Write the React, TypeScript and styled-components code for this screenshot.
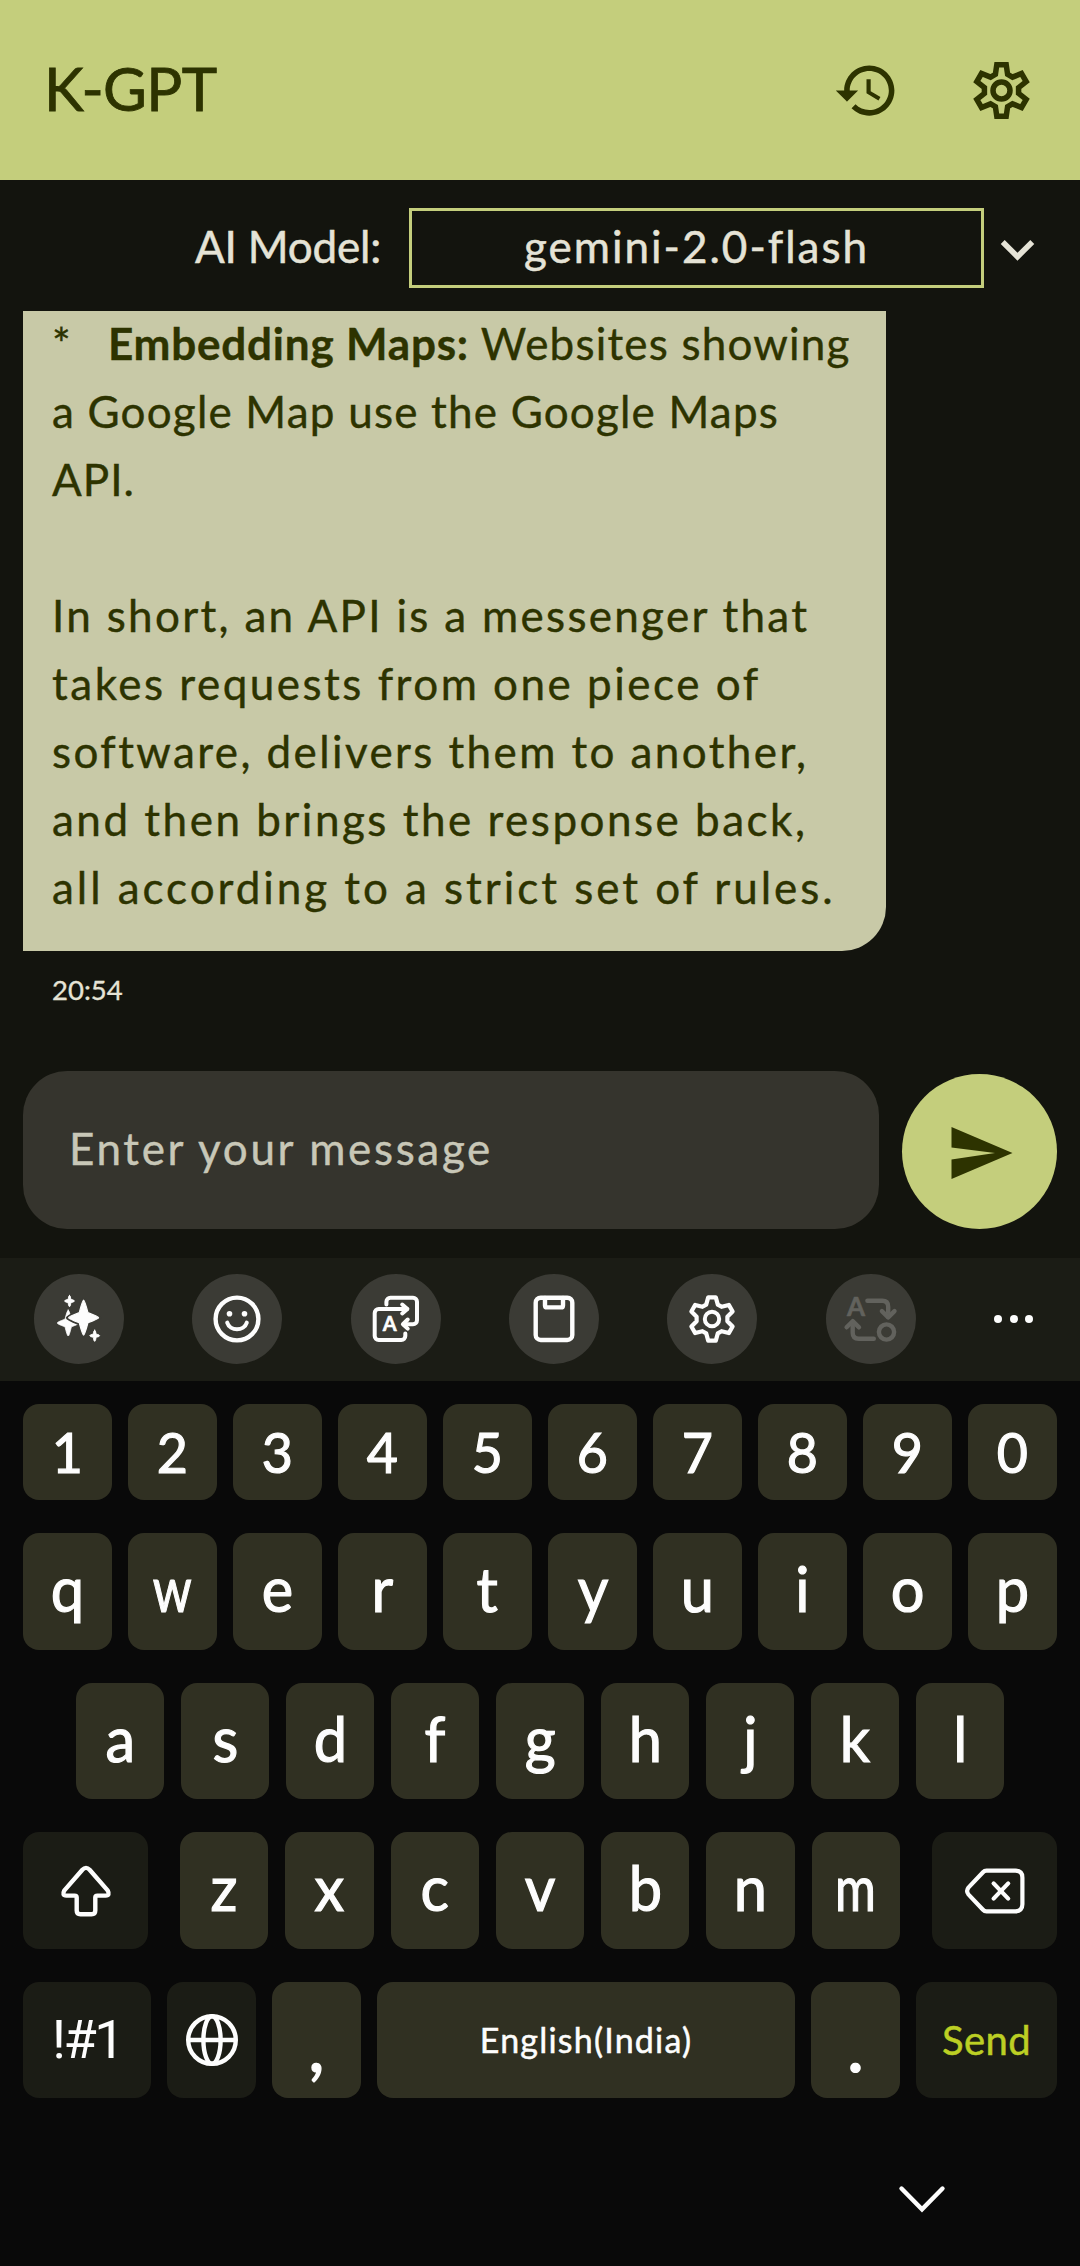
import React from "react";
import styled, { createGlobalStyle } from "styled-components";

const c = {
  lime: "#c4ce7c",
  olive: "#2d3300",
  surface: "#13140e",
  text: "#e5e3d6",
  bubble: "#c8c9a7",
  field: "#35342d",
  hint: "#c8c7b7",
  bar: "#1b1c15",
  chip: "#3b3b35",
  board: "#090909",
  key: "#303022",
  white: "#fdfdfd",
  send: "#bccf24",
  muted: "#62625d",
};

const Global = createGlobalStyle`
  * { box-sizing: border-box; }
  body { margin: 0; background: ${c.board}; }
`;

const Screen = styled.div`
  width: 1080px;
  height: 2266px;
  display: flex;
  flex-direction: column;
  background: ${c.surface};
  font-family: Lato, "Open Sans", sans-serif;
  overflow: hidden;
`;

const Header = styled.header`
  height: 180px;
  flex: none;
  display: flex;
  align-items: center;
  padding: 0 45px 0 44px;
  background: ${c.lime};
  color: ${c.olive};
`;

const Title = styled.h1`
  margin: 0;
  flex: 1;
  font-size: 60px;
  font-weight: 400;
  line-height: 180px;
  letter-spacing: -0.6px;
  -webkit-text-stroke: 0.8px currentColor;
  padding-bottom: 5px;
`;

const HeaderActions = styled.div`
  display: flex;
  align-items: center;
  gap: 68px;
`;

const Svg = styled.svg`
  display: block;
  flex: none;
  overflow: visible;
`;

const ModelRow = styled.div`
  height: 131px;
  flex: none;
  display: flex;
  align-items: flex-start;
  justify-content: flex-end;
  padding: 28px 29px 0 0;
  color: ${c.text};
`;

const ModelLabel = styled.div`
  width: 214px;
  font-size: 44px;
  line-height: 76px;
  letter-spacing: -0.2px;
  white-space: nowrap;
  -webkit-text-stroke: 0.5px currentColor;
`;

const ModelSelect = styled.div`
  width: 575px;
  height: 80px;
  border: 3px solid ${c.lime};
  font-size: 44px;
  line-height: 70px;
  letter-spacing: 2px;
  text-align: center;
  -webkit-text-stroke: 0.5px currentColor;
`;

const ChevronSlot = styled.div`
  width: 67px;
  padding-top: 8px;
`;

const Chat = styled.main`
  height: 747px;
  flex: none;
  padding-left: 23px;
`;

const Bubble = styled.div`
  width: 863px;
  height: 640px;
  overflow: hidden;
  padding: 0 29px;
  background: ${c.bubble};
  border-bottom-right-radius: 44px;
  color: ${c.olive};
`;

const Line = styled.div<{ $ls?: number; $ws?: number; $first?: boolean }>`
  height: 68px;
  margin-top: ${(p) => (p.$first ? -2 : 0)}px;
  font-size: 44px;
  line-height: 68px;
  white-space: pre;
  letter-spacing: ${(p) => p.$ls ?? 0}px;
  word-spacing: ${(p) => p.$ws ?? 0}px;
  -webkit-text-stroke: 0.4px currentColor;
`;

const Bullet = styled.span`
  display: inline-block;
  width: 56px;
`;

const Strong = styled.b<{ $ls: number }>`
  font-weight: 700;
  letter-spacing: ${(p) => p.$ls}px;
`;

const Time = styled.div`
  padding: 22px 0 0 29px;
  font-size: 27.5px;
  line-height: 34px;
  color: ${c.text};
  -webkit-text-stroke: 0.3px currentColor;
`;

const Composer = styled.div`
  height: 200px;
  flex: none;
  display: flex;
  align-items: flex-start;
  gap: 23px;
  padding: 13px 23px 0;
`;

const Field = styled.div`
  flex: 1;
  height: 158px;
  border-radius: 44px;
  background: ${c.field};
  color: ${c.hint};
  padding-left: 46px;
  font-size: 44px;
  line-height: 155px;
  letter-spacing: 2.65px;
  -webkit-text-stroke: 0.4px currentColor;
`;

const SendButton = styled.div`
  width: 155px;
  height: 155px;
  margin-top: 3px;
  border-radius: 50%;
  background: ${c.lime};
  display: flex;
  align-items: center;
  justify-content: center;
`;

const Toolbar = styled.div`
  height: 123px;
  flex: none;
  display: flex;
  align-items: center;
  justify-content: space-between;
  padding: 0 36px 1px 34px;
  background: ${c.bar};
`;

const Chip = styled.div<{ $muted?: boolean }>`
  width: 90px;
  height: 90px;
  border-radius: 50%;
  background: ${c.chip};
  color: ${(p) => (p.$muted ? c.muted : c.white)};
  display: flex;
  align-items: center;
  justify-content: center;
`;

const MoreButton = styled.div`
  width: 60px;
  display: flex;
  justify-content: center;
  gap: 7.5px;
`;

const Dot = styled.i`
  width: 8px;
  height: 8px;
  border-radius: 50%;
  background: ${c.white};
`;

const Keyboard = styled.div`
  flex: 1;
  display: flex;
  flex-direction: column;
  gap: 33px;
  padding: 23px 23px 0;
  background: ${c.board};
`;

const Row = styled.div<{ $h: number; $inset?: number; $gap?: number }>`
  height: ${(p) => p.$h}px;
  flex: none;
  display: flex;
  gap: ${(p) => p.$gap ?? 16}px;
  padding: 0 ${(p) => p.$inset ?? 0}px;
`;

const Key = styled.div<{
  $w?: number;
  $dark?: boolean;
  $size?: number;
  $lift?: number;
  $drop?: number;
  $ls?: number;
  $accent?: boolean;
}>`
  ${(p) => (p.$w ? `flex: 0 0 ${p.$w}px;` : "flex: 1 1 0;")}
  display: flex;
  align-items: center;
  justify-content: center;
  border-radius: 16px;
  background: ${(p) => (p.$dark ? c.bar : c.key)};
  color: ${(p) => (p.$accent ? c.send : c.white)};
  font-size: ${(p) => p.$size ?? 62}px;
  line-height: 1.2;
  letter-spacing: ${(p) => p.$ls ?? 0}px;
  padding-bottom: ${(p) => p.$lift ?? 0}px;
  padding-top: ${(p) => p.$drop ?? 0}px;
  -webkit-text-stroke: ${(p) => ((p.$size ?? 62) > 50 ? 1.2 : 0.5)}px currentColor;
`;

const SymbolKey = styled(Key)`
  font-family: Roboto, sans-serif;
  -webkit-text-stroke: 0;
`;

const Glyph = styled.span<{ $narrow?: boolean }>`
  display: inline-block;
  transform: scaleX(${(p) => (p.$narrow ? 0.8 : 0.96)});
`;

const Letters = styled.div`
  flex: 1;
  display: flex;
  gap: 17px;
`;

const NavBar = styled.div`
  height: 168px;
  margin-top: -33px;
  display: flex;
  justify-content: flex-end;
  align-items: center;
  padding: 34px 105px 0 0;
  color: ${c.white};
`;

type IconProps = { size?: number; sw?: number; children: React.ReactNode };

const Icon = ({ size = 60, sw = 4.4, children }: IconProps) => (
  <Svg
    width={size}
    height={size}
    viewBox={`${-size / 2} ${-size / 2} ${size} ${size}`}
    fill="none"
    stroke="currentColor"
    strokeWidth={sw}
    strokeLinecap="round"
    strokeLinejoin="round"
  >
    {children}
  </Svg>
);

// Six-toothed gear outline: tooth tip and tooth base given as half-width and radius.
const gear = (tipW: number, tipR: number, baseW: number, baseR: number) => {
  const pts: string[] = [];
  for (let i = 0; i < 6; i++) {
    const a = (i * Math.PI) / 3;
    [
      [-baseW, -baseR],
      [-tipW, -tipR],
      [tipW, -tipR],
      [baseW, -baseR],
    ].forEach(([x, y]) => {
      pts.push(
        `${(x * Math.cos(a) - y * Math.sin(a)).toFixed(2)},${(x * Math.sin(a) + y * Math.cos(a)).toFixed(2)}`
      );
    });
  }
  return pts.join(" ");
};

// Four-pointed star with softly rounded tips.
const star = (x: number, y: number, rx: number, ry: number) => {
  const k = 0.29;
  return `M${x} ${y - ry}Q${x + 1} ${y - ry} ${x + rx * k} ${y - ry * k}Q${x + rx} ${y - 1} ${x + rx} ${y}Q${x + rx} ${y + 1} ${x + rx * k} ${y + ry * k}Q${x + 1} ${y + ry} ${x} ${y + ry}Q${x - 1} ${y + ry} ${x - rx * k} ${y + ry * k}Q${x - rx} ${y + 1} ${x - rx} ${y}Q${x - rx} ${y - 1} ${x - rx * k} ${y - ry * k}Q${x - 1} ${y - ry} ${x} ${y - ry}Z`;
};

const HistoryIcon = () => (
  <Svg width="67" height="67" viewBox="0 0 24 24" fill={c.olive}>
    <path d="M13 3c-4.97 0-9 4.03-9 9H1l3.89 3.89.07.14L9 12H6c0-3.87 3.13-7 7-7s7 3.13 7 7-3.13 7-7 7c-1.93 0-3.68-.79-4.94-2.06l-1.42 1.42C8.27 19.99 10.51 21 13 21c4.97 0 9-4.03 9-9s-4.03-9-9-9zm-1 5v5l4.28 2.54.72-1.21-3.5-2.08V8H12z" />
  </Svg>
);

const HeaderGear = () => (
  <Icon size={67} sw={5.5}>
    <polygon points={gear(4.7, 25.8, 6.1, 16.2)} strokeLinejoin="miter" />
    <circle r="8.5" />
  </Icon>
);

const Sparkles = () => (
  <Icon sw={0}>
    <path d={star(-10.8, 4, 11, 13)} fill="currentColor" stroke="currentColor" strokeWidth="0.8" />
    <path d={star(4.6, -1.3, 15.6, 18)} fill="currentColor" stroke={c.chip} strokeWidth="4.4" />
    <path d={star(4.6, -1.3, 15, 17.5)} fill="currentColor" stroke="currentColor" strokeWidth="1.2" />
    <path d={star(-9.5, -18, 5, 5.7)} fill="currentColor" stroke="currentColor" strokeWidth="0.8" />
    <path d={star(15.7, 16.7, 5, 5.7)} fill="currentColor" stroke="currentColor" strokeWidth="0.8" />
  </Icon>
);

const Smile = () => (
  <Icon>
    <circle r="21.4" />
    <circle cx="-7.5" cy="-5.3" r="2.8" fill="currentColor" stroke="none" />
    <circle cx="7.5" cy="-5.3" r="2.8" fill="currentColor" stroke="none" />
    <path d="M-9.8 3.6C-7 12.6 7 12.6 9.8 3.6" strokeWidth="4" />
  </Icon>
);

const IconLetter = styled.text`
  font-family: Lato, sans-serif;
  font-weight: 700;
  fill: currentColor;
  stroke: currentColor;
  stroke-width: 0.6px;
  text-anchor: middle;
`;

const Translate = () => (
  <Icon sw={4}>
    <path d="M11-10H-17.3a4 4 0 0 0-4 4V17a4 4 0 0 0 4 4H5.3a4 4 0 0 0 4-4V14.6" />
    <path d="M6.2-14.5L11.4-10L6.2-5.5" />
    <path d="M-9.6-14.6V-17.3a4 4 0 0 1 4-4H17a4 4 0 0 1 4 4V1.3a4 4 0 0 1-4 4H7.6" />
    <path d="M11.7.5L6.9 5.2L11.7 9.6" />
    <IconLetter x="-6.4" y="12.4" fontSize="20">A</IconLetter>
  </Icon>
);

const Clipboard = () => (
  <Icon>
    <rect x="-18.3" y="-21.3" width="36.6" height="42.3" rx="5" />
    <path d="M-9-21V-13.6q0 2 2 2H7q2 0 2-2V-21" />
  </Icon>
);

const KeyboardGear = () => (
  <Icon sw={4}>
    <polygon points={gear(3.8, 21.6, 5.8, 14.4)} strokeWidth="4.2" />
    <circle r="7.2" />
  </Icon>
);

const Swap = () => (
  <Icon>
    <IconLetter x="-15" y="-3" fontSize="26">A</IconLetter>
    <path d="M-3.6-18.3H11.2q6 0 6 6V-2" />
    <path d="M10.9-7.9L17.2-1.6L23.5-7.9" />
    <path d="M-18.3 3V13.7q0 6 6 6H2.8" />
    <path d="M-24.4 8.3L-18.3 2.2L-12 8.3" />
    <circle cx="15.5" cy="13" r="7.6" />
  </Icon>
);

const Shift = () => (
  <Icon sw={4.4}>
    <path d="M-3.6-21.2Q0-25 3.6-21.2L21.6-.6Q24.4 4.6 19.6 4.6H11.4Q9.3 4.6 9.3 6.6V19.5Q9.3 23.2 5.6 23.2H-5.6Q-9.3 23.2-9.3 19.5V6.6Q-9.3 4.6-11.4 4.6H-19.6Q-24.4 4.6-21.6-.6Z" />
  </Icon>
);

const Backspace = () => (
  <Icon size={64} sw={4.2}>
    <path d="M-8.5-20.3H20.4q7 0 7 7V13.3q0 7-7 7H-8.5Q-10.6 20.3-12 18.8L-26.4 3.6Q-29.4 0-26.4-3.6L-12-18.8Q-10.6-20.3-8.5-20.3Z" />
    <path d="M-1.4-7.6L13.2 7.6M13.2-7.6L-1.4 7.6" />
  </Icon>
);

const Globe = () => (
  <Icon>
    <circle r="23.8" />
    <ellipse rx="8.6" ry="23.8" />
    <path d="M-23 0H23" />
  </Icon>
);

const ChevronDown = () => (
  <Svg width="67" height="67" viewBox="0 0 24 24" fill={c.text}>
    <path d="M16.59 8.59 12 13.17 7.41 8.59 6 10l6 6 6-6z" />
  </Svg>
);

const letterKeys = (s: string) =>
  s.split("").map((k) => (
    <Key key={k} $lift={6}>
      <Glyph $narrow={k === "m" || k === "w"}>{k}</Glyph>
    </Key>
  ));

export default function App() {
  return (
    <Screen>
      <Global />
      <Header>
        <Title>K-GPT</Title>
        <HeaderActions>
          <HistoryIcon />
          <HeaderGear />
        </HeaderActions>
      </Header>

      <ModelRow>
        <ModelLabel>AI Model:</ModelLabel>
        <ModelSelect>gemini-2.0-flash</ModelSelect>
        <ChevronSlot>
          <ChevronDown />
        </ChevronSlot>
      </ModelRow>

      <Chat>
        <Bubble>
          <Line $first $ls={1.2}>
            <Bullet>*</Bullet>
            <Strong $ls={0.8}>Embedding Maps:</Strong> Websites showing
          </Line>
          <Line $ls={1.2}>a Google Map use the Google Maps</Line>
          <Line $ls={1}>API.</Line>
          <Line />
          <Line $ls={2.3}>In short, an API is a messenger that</Line>
          <Line $ls={2.5}>takes requests from one piece of</Line>
          <Line $ls={2.4}>software, delivers them to another,</Line>
          <Line $ls={2.5}>and then brings the response back,</Line>
          <Line $ls={2.95}>all according to a strict set of rules.</Line>
        </Bubble>
        <Time>20:54</Time>
      </Chat>

      <Composer>
        <Field>Enter your message</Field>
        <SendButton>
          <Svg width="64" height="60" viewBox="0 0 64 60" fill={c.olive}>
            <path d="M3.5 5L64.5 31L3.5 57V37.5L47 31L3.5 25.5Z" />
          </Svg>
        </SendButton>
      </Composer>

      <Toolbar>
        <Chip><Sparkles /></Chip>
        <Chip><Smile /></Chip>
        <Chip><Translate /></Chip>
        <Chip><Clipboard /></Chip>
        <Chip><KeyboardGear /></Chip>
        <Chip $muted><Swap /></Chip>
        <MoreButton>
          <Dot />
          <Dot />
          <Dot />
        </MoreButton>
      </Toolbar>

      <Keyboard>
        <Row $h={96}>
          {"1234567890".split("").map((k) => (
            <Key key={k} $size={56}>
              <Glyph>{k}</Glyph>
            </Key>
          ))}
        </Row>
        <Row $h={117}>{letterKeys("qwertyuiop")}</Row>
        <Row $h={116} $inset={53} $gap={17}>{letterKeys("asdfghjkl")}</Row>
        <Row $h={117} $gap={32}>
          <Key $w={125} $dark><Shift /></Key>
          <Letters>{letterKeys("zxcvbnm")}</Letters>
          <Key $w={125} $dark><Backspace /></Key>
        </Row>
        <Row $h={116}>
          <SymbolKey $w={128} $dark $size={54} $ls={-2.5}>!#1</SymbolKey>
          <Key $w={89} $dark><Globe /></Key>
          <Key $w={89} $drop={8} $size={74}>,</Key>
          <Key $size={34} $ls={1.2}>English(India)</Key>
          <Key $w={89} $drop={8} $size={74}>.</Key>
          <Key $w={141} $dark $accent $size={40} $ls={0.4}>Send</Key>
        </Row>
        <NavBar>
          <Icon sw={4.4}>
            <path d="M-20.5-10.5L0 10.3L20.5-10.5" strokeLinejoin="miter" />
          </Icon>
        </NavBar>
      </Keyboard>
    </Screen>
  );
}
